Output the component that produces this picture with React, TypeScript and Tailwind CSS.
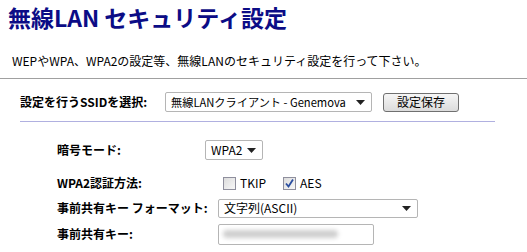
import React from "react";

const font = { fontFamily: '"MS UI Gothic", "Noto Sans CJK JP", "Liberation Sans", sans-serif' };

function Caret() {
  return (
    <svg width="9" height="5" viewBox="0 0 9 5" className="shrink-0">
      <path d="M0 0H9L4.5 5Z" fill="#222" />
    </svg>
  );
}

function Select({ text, w, h = 20, small }: { text: string; w: number; h?: number; small?: boolean }) {
  return (
    <div
      className={`flex items-center justify-between border border-[#b5b5b5] rounded-[2px] bg-white pl-[5px] pr-[6px] text-black ${small ? "text-[11.2px]" : "text-[12px]"}`}
      style={{ width: w, height: h }}
    >
      <span className="whitespace-nowrap">{text}</span>
      <Caret />
    </div>
  );
}

function Check({ checked }: { checked?: boolean }) {
  return (
    <div className="w-[13px] h-[13px] border border-[#8f8f9d] bg-gradient-to-br from-[#dcdcdc] to-[#f8f8f8] flex items-center justify-center">
      {checked && (
        <svg width="11" height="11" viewBox="0 0 11 11">
          <path d="M2 5.5L4.5 8.5L9 1.5" stroke="#2a4ea0" strokeWidth="1.8" fill="none" />
        </svg>
      )}
    </div>
  );
}

export default function App() {
  return (
    <div className="w-[527px] h-[252px] bg-white overflow-hidden text-black" style={font}>
      <div className="pl-[8px] pt-[2px] h-[32px] text-[23px] font-bold text-[#0c0c86] leading-[30px] whitespace-nowrap">
        無線LAN セキュリティ設定
      </div>
      <div className="pl-[12px] mt-[22px] text-[12px] leading-[14px] whitespace-nowrap">
        WEPやWPA、WPA2の設定等、無線LANのセキュリティ設定を行って下さい。
      </div>
      <div className="mt-[10px] h-px bg-[#a0a0a0]" />
      <div className="flex items-center mt-[13px] pl-[20px] h-[20px]">
        <span className="text-[12px] font-bold w-[145px] whitespace-nowrap">設定を行うSSIDを選択:</span>
        <Select text="無線LANクライアント - Genemova" w={207} small />
        <div className="ml-[11px] w-[76px] h-[19px] border border-[#707070] rounded-[3px] bg-gradient-to-b from-[#f6f6f6] to-[#dcdcdc] flex items-center justify-center text-[12px]">
          設定保存
        </div>
      </div>
      <div className="ml-[20px] mt-[9px] w-[475px] h-px bg-[#b0b0e0]" />
      <div className="pl-[57px] mt-[18px] flex flex-col">
        <div className="flex items-center h-[20px]">
          <span className="text-[12px] font-bold w-[148px]">暗号モード:</span>
          <Select text="WPA2" w={58} />
        </div>
        <div className="flex items-center h-[20px] mt-[13px]">
          <span className="text-[12px] font-bold w-[166px]">WPA2認証方法:</span>
          <Check />
          <span className="text-[12px] ml-[4px]">TKIP</span>
          <div className="ml-[17px]"><Check checked /></div>
          <span className="text-[12px] ml-[4px]">AES</span>
        </div>
        <div className="flex items-center h-[20px] mt-[5px]">
          <span className="text-[12px] font-bold w-[161px] whitespace-nowrap">事前共有キー フォーマット:</span>
          <Select text="文字列(ASCII)" w={200} h={19} />
        </div>
        <div className="flex items-center h-[22px] mt-[5px]">
          <span className="text-[12px] font-bold w-[161px]">事前共有キー:</span>
          <div className="w-[156px] h-[21px] border border-[#b5b5b5] rounded-[2px] bg-white flex items-center pl-[4px]">
            <div className="w-[115px] h-[8px] rounded-full bg-[#cfcfcf] blur-[2px]" />
          </div>
        </div>
      </div>
    </div>
  );
}
